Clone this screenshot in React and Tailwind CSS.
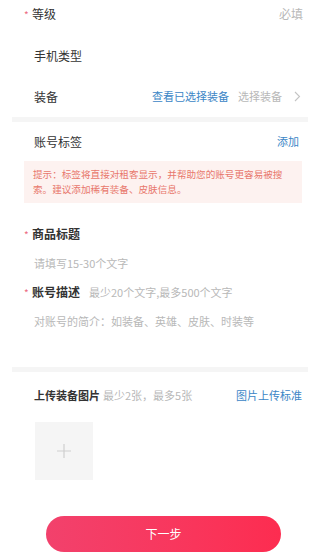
import React from "react";

const font = { fontFamily: '"Noto Sans CJK SC", "Noto Sans", sans-serif' };

function Star() {
  return <span className="w-[8px] text-[10px] leading-none text-[#ec6a80] mt-[1px]">*</span>;
}

function Row({ className = "", children }) {
  return <div className={"flex items-center pr-[17px] " + className}>{children}</div>;
}

export default function App() {
  return (
    <div className="w-[320px] h-[559px] bg-white overflow-hidden text-[#333]" style={font}>
      {/* 基本信息 */}
      <Row className="h-[35px] pb-[7px] pl-[24px]">
        <div className="flex items-center">
          <Star />
          <span className="text-[12px]">等级</span>
        </div>
        <span className="ml-auto text-[12px] text-[#b8b8b8]">必填</span>
      </Row>
      <Row className="h-[41px] pl-[34px]">
        <span className="text-[12px]">手机类型</span>
      </Row>
      <Row className="h-[41px] pl-[34px]">
        <span className="text-[12px]">装备</span>
        <span className="ml-auto text-[11px] text-[#3b86c6]">查看已选择装备</span>
        <span className="ml-[9px] text-[11px] text-[#b8b8b8]">选择装备</span>
        <svg className="ml-[12px] mr-[2px]" width="7" height="11" viewBox="0 0 7 11" fill="none">
          <path d="M1 1l4.5 4.5L1 10" stroke="#c4c4c4" strokeWidth="1.1" />
        </svg>
      </Row>
      <div className="h-[5px] mx-[12px] bg-[#f5f5f5]" />

      {/* 账号标签 */}
      <Row className="h-[39px] pl-[34px]">
        <span className="text-[12px]">账号标签</span>
        <span className="ml-auto mr-[4px] text-[11px] text-[#3b86c6]">添加</span>
      </Row>
      <div className="ml-[24px] mr-[18px] bg-[#fdf2f0] px-[9px] py-[6px] text-[9.6px] leading-[15px] text-[#e8776c]">
        提示：标签将直接对租客显示，并帮助您的账号更容易被搜索。建议添加稀有装备、皮肤信息。
      </div>

      <Row className="h-[30px] mt-[16px] pl-[24px]">
        <div className="flex items-center">
          <Star />
          <span className="text-[12px] font-semibold">商品标题</span>
        </div>
      </Row>
      <Row className="h-[28px] pl-[34px]">
        <span className="text-[11px] text-[#b8b8b8]">请填写15-30个文字</span>
      </Row>
      <Row className="h-[30px] pl-[24px]">
        <div className="flex items-center">
          <Star />
          <span className="text-[12px] font-bold">账号描述</span>
          <span className="ml-[9px] text-[11px] text-[#b8b8b8]">最少20个文字,最多500个文字</span>
        </div>
      </Row>
      <Row className="h-[28px] pl-[34px]">
        <span className="text-[11px] text-[#b8b8b8]">对账号的简介：如装备、英雄、皮肤、时装等</span>
      </Row>
      <div className="h-[32px]" />
      <div className="h-[5px] mx-[12px] bg-[#f5f5f5]" />

      {/* 上传图片 */}
      <Row className="h-[46px] pl-[34px]">
        <span className="text-[11px] font-bold">上传装备图片</span>
        <span className="ml-[3px] text-[11px] text-[#b8b8b8]">最少2张，最多5张</span>
        <span className="ml-auto mr-[1px] text-[11px] text-[#3b86c6]">图片上传标准</span>
      </Row>
      <div className="mt-[4px] ml-[35px] w-[58px] h-[58px] bg-[#f5f5f5] flex items-center justify-center">
        <svg width="16" height="16" viewBox="0 0 16 16">
          <path d="M8 1v14M1 8h14" stroke="#cfcfcf" strokeWidth="1.2" />
        </svg>
      </div>

      <button className="mt-[36px] ml-[46px] w-[235px] h-[36px] rounded-full bg-gradient-to-r from-[#f2416c] to-[#fd2c50] text-white text-[12px] flex items-center justify-center">
        下一步
      </button>
    </div>
  );
}
